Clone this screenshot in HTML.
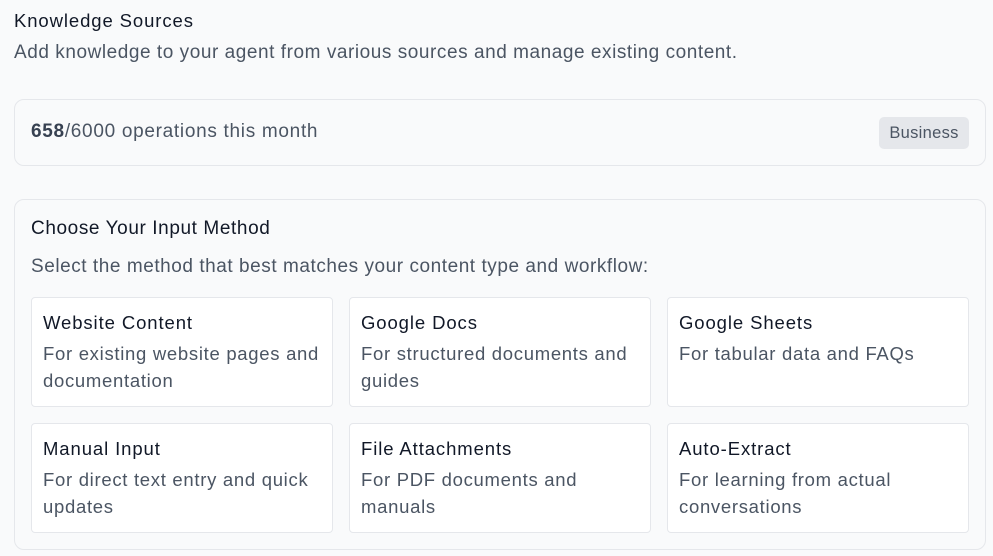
<!DOCTYPE html>
<html><head><style>
*{box-sizing:border-box;margin:0;padding:0}
body{width:993px;height:556px;background:#f9fafb;font-family:"Liberation Sans",sans-serif;color:#111827;position:relative;overflow:hidden;letter-spacing:0.5px}
.a{position:absolute;white-space:nowrap}
.box{position:absolute;border:1px solid #e5e7eb;border-radius:10px;background:#f9fafb}
.card{position:absolute;width:302px;border:1px solid #e5e7eb;border-radius:4px;background:#fff;padding:12px 11px}
.card h3{font-size:18.5px;font-weight:normal;color:#111827;line-height:24px;margin-top:1px;letter-spacing:0.9px}
.card p{font-size:18.5px;color:#4b5563;line-height:27px;margin-top:5px;letter-spacing:0.7px}
</style></head><body>
<div class="a" style="left:14px;top:10px;font-size:18.5px;color:#111827;letter-spacing:0.9px">Knowledge Sources</div>
<div class="a" style="left:14px;top:42px;font-size:19px;color:#4b5563;letter-spacing:0.55px">Add knowledge to your agent from various sources and manage existing content.</div>
<div class="box" style="left:14px;top:99px;width:972px;height:67px"></div>
<div class="a" style="left:31px;top:121px;font-size:19px;color:#4b5563;letter-spacing:0.7px"><span style="color:#374151;font-weight:bold">658</span>/6000 operations this month</div>
<div class="a" style="left:879px;top:117px;width:90px;height:32px;background:#e5e7eb;border-radius:5px;font-size:16.5px;color:#4b5563;text-align:center;line-height:32px;letter-spacing:0.3px">Business</div>
<div class="box" style="left:14px;top:199px;width:972px;height:351px"></div>
<div class="a" style="left:31px;top:218px;font-size:19px;color:#111827;letter-spacing:0.6px">Choose Your Input Method</div>
<div class="a" style="left:31px;top:256px;font-size:19px;color:#4b5563;letter-spacing:0.55px">Select the method that best matches your content type and workflow:</div>
<div class="card" style="left:31px;top:297px;height:110px"><h3>Website Content</h3><p>For existing website pages and documentation</p></div>
<div class="card" style="left:349px;top:297px;height:110px"><h3>Google Docs</h3><p>For structured documents and guides</p></div>
<div class="card" style="left:667px;top:297px;height:110px"><h3>Google Sheets</h3><p>For tabular data and FAQs</p></div>
<div class="card" style="left:31px;top:423px;height:110px"><h3>Manual Input</h3><p>For direct text entry and quick updates</p></div>
<div class="card" style="left:349px;top:423px;height:110px"><h3>File Attachments</h3><p>For PDF documents and manuals</p></div>
<div class="card" style="left:667px;top:423px;height:110px"><h3>Auto-Extract</h3><p>For learning from actual conversations</p></div>
</body></html>
